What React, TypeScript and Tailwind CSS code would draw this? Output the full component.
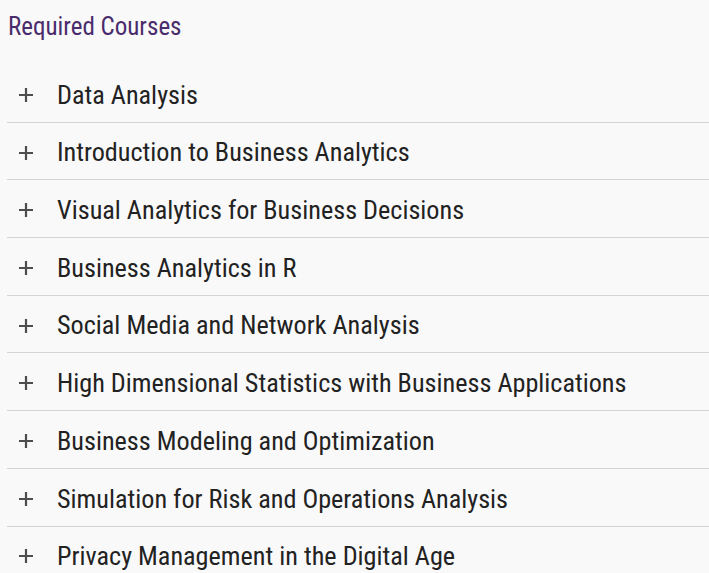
import React from 'react';

const courses = [
  'Data Analysis',
  'Introduction to Business Analytics',
  'Visual Analytics for Business Decisions',
  'Business Analytics in R',
  'Social Media and Network Analysis',
  'High Dimensional Statistics with Business Applications',
  'Business Modeling and Optimization',
  'Simulation for Risk and Operations Analysis',
  'Privacy Management in the Digital Age',
];

function PlusIcon() {
  return (
    <svg width="16" height="16" viewBox="0 0 16 16" className="mt-[3px] shrink-0">
      <path d="M8 1v14M1 8h14" stroke="#4d4d4d" strokeWidth="2.2" />
    </svg>
  );
}

export default function App() {
  return (
    <div
      className="min-h-[573px] w-[709px] overflow-hidden bg-[#f9f9f9] pl-[7px]"
      style={{ fontFamily: 'Roboto, "Liberation Sans", sans-serif', fontStretch: 'condensed' }}
    >
      {/* Header */}
      <h2 className="pt-[13px] pl-[1px] text-[25px] leading-[28px] text-[#4a2c6c]">Required Courses</h2>

      {/* Course list */}
      <ul className="mt-[24px]">
        {courses.map((course) => (
          <li
            key={course}
            className="flex h-[57.7px] items-center border-b border-[#d4d4d4] pl-[11px] text-[#222]"
          >
            <PlusIcon />
            <span className="ml-[23px] pt-[3px] text-[26.2px] leading-none">{course}</span>
          </li>
        ))}
      </ul>
    </div>
  );
}
